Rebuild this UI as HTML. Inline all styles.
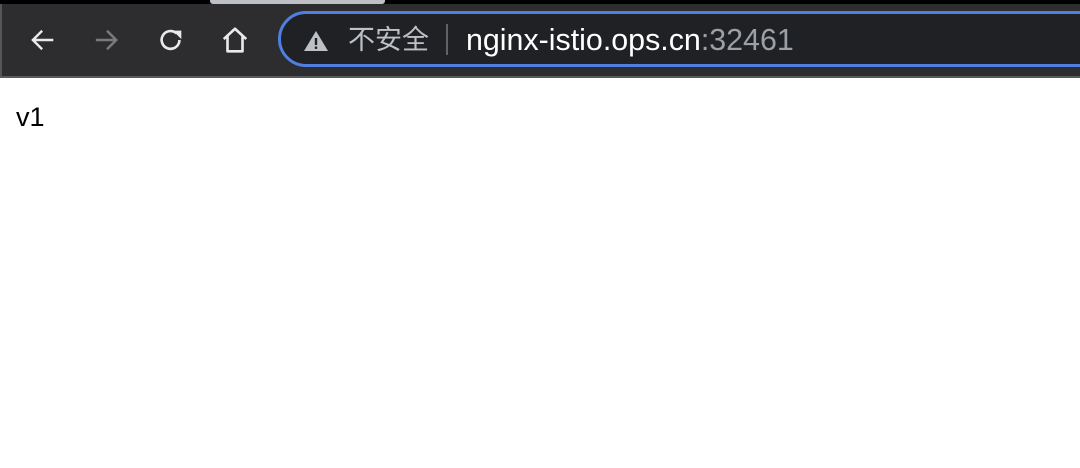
<!DOCTYPE html>
<html><head><meta charset="utf-8"><style>
body{margin:0;width:1080px;height:468px;background:#fff;overflow:hidden;font-family:"Liberation Sans","Noto Sans CJK SC",sans-serif;position:relative}
.top{position:absolute;left:0;top:0;width:1080px;height:4px;background:#000}
.tab{position:absolute;left:210px;top:0;width:175px;height:4px;background:#bdc1c6;border-radius:0 0 3px 3px}
.bar{position:absolute;left:0;top:4px;width:1080px;height:72px;background:#2d2d2f;border-left:2px solid #555;box-sizing:border-box}
.line{position:absolute;left:0;top:76px;width:1080px;height:2px;background:#5a5a5c}
.omni{position:absolute;left:278px;top:11px;width:840px;height:56px;border:3px solid #4f80e1;border-radius:31px;background:#202124;box-sizing:border-box}
.t{position:absolute;top:23px;line-height:34px;white-space:nowrap}
svg{position:absolute}
</style></head><body>
<div class="top"></div><div class="tab"></div>
<div class="bar"></div><div class="line"></div>
<svg style="left:29px;top:27px" width="30" height="26" viewBox="0 0 32 28"><path d="M26 14H4M14 4L4 14L14 24" stroke="#e8eaed" stroke-width="2.6" fill="none"/></svg>
<svg style="left:92px;top:27px" width="30" height="26" viewBox="0 0 32 28"><path d="M4 14H26M16 4L26 14L16 24" stroke="#7a7b7d" stroke-width="2.6" fill="none"/></svg>
<svg style="left:156px;top:25px" width="30" height="30" viewBox="0 0 32 32"><path d="M25 16A9.5 9.5 0 1 1 22 9" stroke="#e8eaed" stroke-width="2.8" fill="none"/><path d="M18 6H27V15Z" fill="#e8eaed"/></svg>
<svg style="left:219px;top:25px" width="32" height="30" viewBox="0 0 34 32"><path d="M5 15L17 4L29 15M9 12V28H25V12" stroke="#e8eaed" stroke-width="2.8" fill="none" stroke-linejoin="round"/></svg>
<div class="omni"></div>
<svg style="left:303px;top:29px" width="26" height="24" viewBox="0 0 26 24"><path d="M13 2L25 22H1Z" fill="#bdc1c6"/><rect x="11.8" y="9" width="2.4" height="7" fill="#202124"/><rect x="11.8" y="17.5" width="2.4" height="2.4" fill="#202124"/></svg>
<div class="t" style="left:348px;color:#bdc1c6;font-size:27px">不安全</div>
<div style="position:absolute;left:446px;top:24px;width:2px;height:31px;background:#5f6368"></div>
<div class="t" style="left:466px;color:#fff;font-size:30.4px">nginx-istio.ops.cn<span style="color:#9aa0a6">:32461</span></div>
<div style="position:absolute;left:16px;top:102px;font-size:27px;color:#000">v1</div>
</body></html>
